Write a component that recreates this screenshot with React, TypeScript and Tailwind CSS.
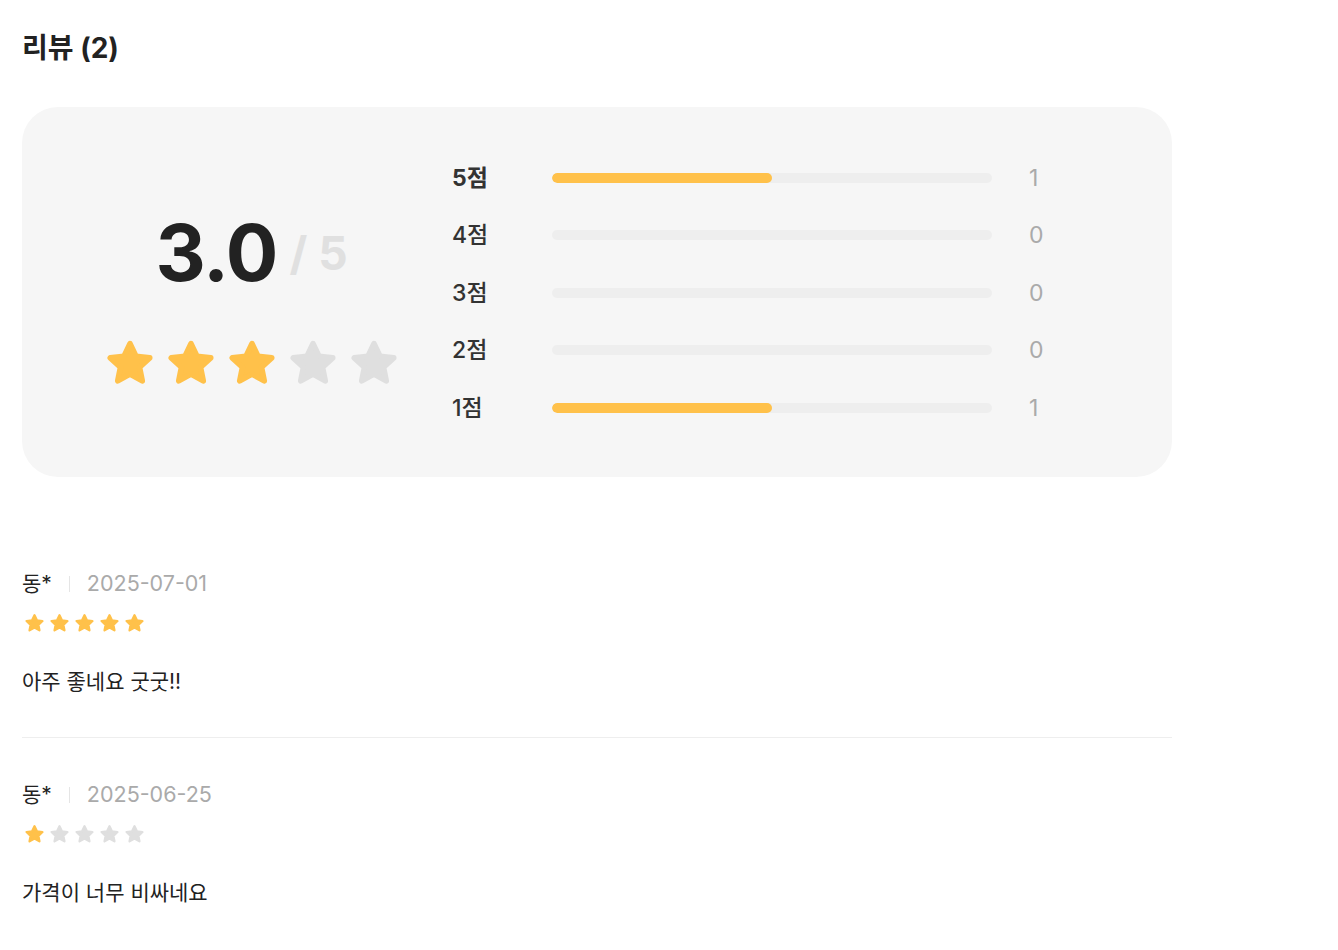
import { Fragment } from "react";

const FONT = "font-['Inter','Noto_Sans_CJK_KR',sans-serif]";

const summary = [
  { score: 5, count: 1 },
  { score: 4, count: 0 },
  { score: 3, count: 0 },
  { score: 2, count: 0 },
  { score: 1, count: 1 },
];

const reviews = [
  { name: "동*", date: "2025-07-01", rating: 5, text: "아주 좋네요 굿굿!!" },
  { name: "동*", date: "2025-06-25", rating: 1, text: "가격이 너무 비싸네요" },
];

function Star({ on, className }: { on: boolean; className: string }) {
  const c = on ? "#ffc14a" : "#dfdfdf";
  return (
    <svg viewBox="0 0 24 24" className={className}>
      <polygon
        points="12,2.6 14.75,8.4 21.1,9.15 16.4,13.5 17.65,19.8 12,16.65 6.35,19.8 7.6,13.5 2.9,9.15 9.25,8.4"
        fill={c}
        stroke={c}
        strokeWidth={2.6}
        strokeLinejoin="round"
      />
    </svg>
  );
}

export default function App() {
  const total = reviews.length;
  return (
    <div className={`${FONT} min-h-screen bg-white text-[#222] px-[22px] pt-[30px]`}>
      <div className="w-[1150px]">
        <h2 className="text-[28px] leading-[36px] font-bold text-[#222]">리뷰 (2)</h2>

        <div className="mt-[41px] flex items-center rounded-[36px] bg-[#f6f6f6] pt-[42px] pb-[40px] pl-[84px]">
          <div className="flex w-[291px] flex-col items-center pt-[12px]">
            <div className="flex items-center">
              <span className="text-[78px] leading-[90px] font-bold tracking-[-1px] text-[#222]">3.0</span>
              <span className="ml-[12px] text-[46px] leading-[56px] font-bold text-[#e0e0e0]">/ 5</span>
            </div>
            <div className="mt-[40px] flex gap-[9px]">
              {[1, 2, 3, 4, 5].map((i) => (
                <Star key={i} on={i <= 3} className="h-[52px] w-[52px]" />
              ))}
            </div>
          </div>

          <div className="ml-[55px] flex flex-col">
            {summary.map((s) => (
              <div key={s.score} className="flex h-[57.5px] items-center">
                <span
                  className={`w-[100px] text-[23px] text-[#333] ${s.score === 5 ? "font-bold" : "font-medium"}`}
                >
                  {s.score}점
                </span>
                <div className="h-[10px] w-[440px] overflow-hidden rounded-full bg-[#eeeeee]">
                  <div
                    className="h-full rounded-full bg-[#ffc14a]"
                    style={{ width: `${(s.count / total) * 100}%` }}
                  />
                </div>
                <span className="ml-[37px] text-[23px] text-[#aaa]">{s.count}</span>
              </div>
            ))}
          </div>
        </div>

        <div className="mt-[50px]">
          {reviews.map((r, idx) => (
            <Fragment key={idx}>
              {idx > 0 && <div className="h-px bg-[#eeeeee]" />}
              <div className="pt-[42px] pb-[40px]">
                <div className="flex h-[30px] items-center">
                  <span className="text-[21px] text-[#222]">{r.name}</span>
                  <span className="mx-[17px] h-[16px] w-px bg-[#e5e5e5]" />
                  <span className="text-[21.5px] text-[#aaa]">{r.date}</span>
                </div>
                <div className="mt-[14px] flex gap-[4px] pl-[2px]">
                  {[1, 2, 3, 4, 5].map((i) => (
                    <Star key={i} on={i <= r.rating} className="h-[21px] w-[21px]" />
                  ))}
                </div>
                <p className="mt-[33px] text-[21px] leading-[30px] text-[#222]">{r.text}</p>
              </div>
            </Fragment>
          ))}
        </div>
      </div>
    </div>
  );
}
